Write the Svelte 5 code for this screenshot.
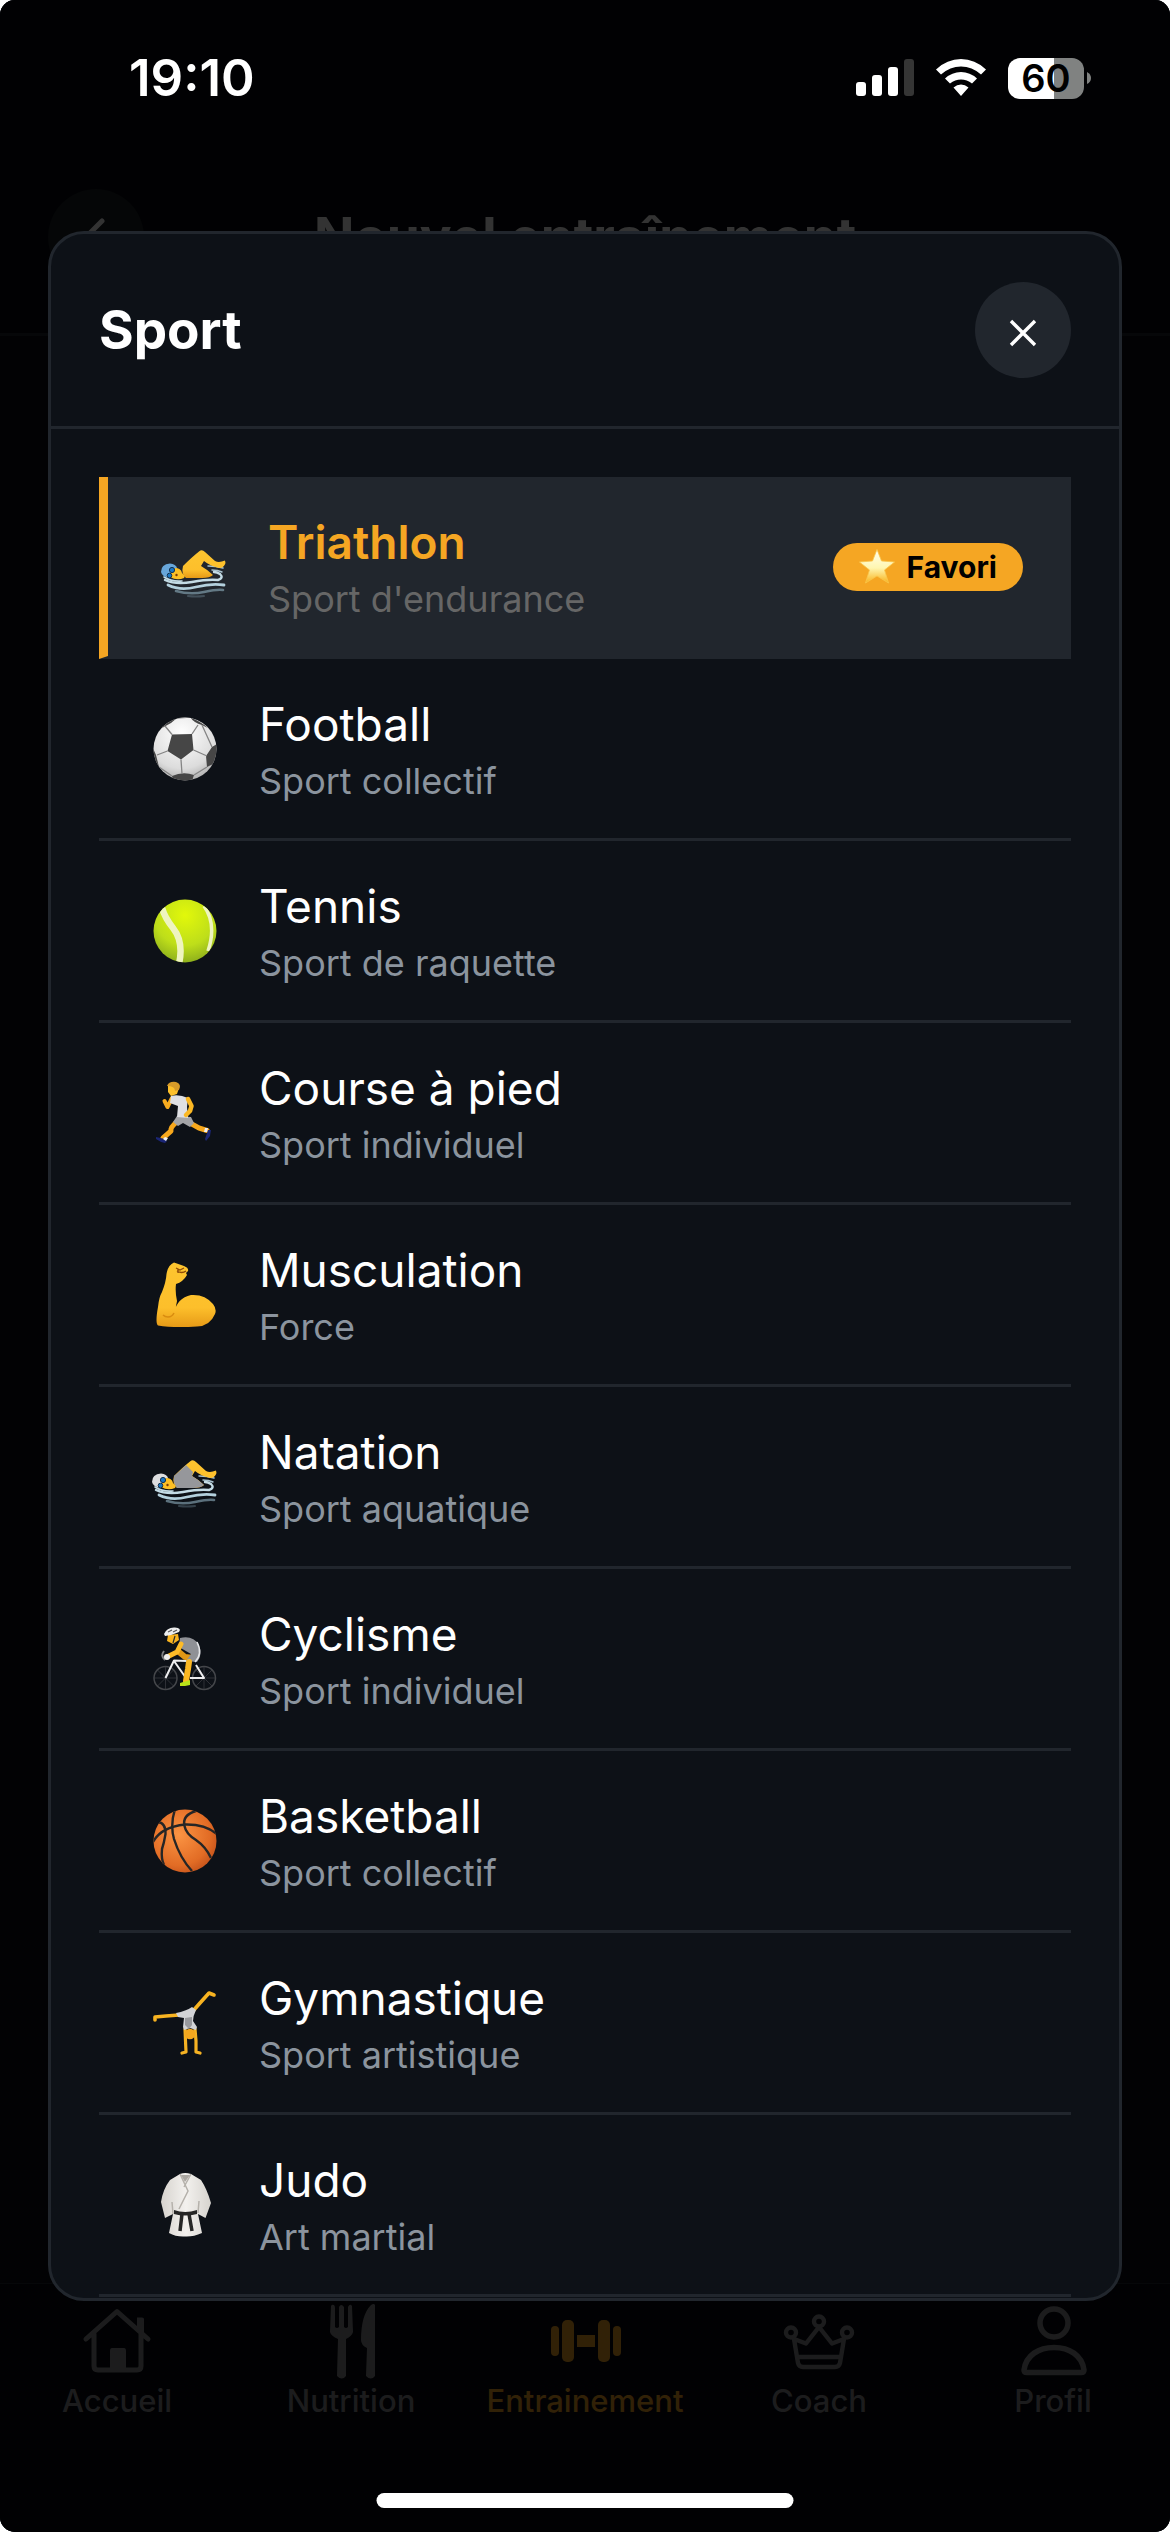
<script>
  const sports = [
    { icon: 'swim', name: 'Triathlon', kind: "Sport d'endurance", favorite: true },
    { icon: 'football', name: 'Football', kind: 'Sport collectif' },
    { icon: 'tennis', name: 'Tennis', kind: 'Sport de raquette' },
    { icon: 'run', name: 'Course à pied', kind: 'Sport individuel' },
    { icon: 'muscle', name: 'Musculation', kind: 'Force' },
    { icon: 'swimsuit', name: 'Natation', kind: 'Sport aquatique' },
    { icon: 'bike', name: 'Cyclisme', kind: 'Sport individuel' },
    { icon: 'basket', name: 'Basketball', kind: 'Sport collectif' },
    { icon: 'gym', name: 'Gymnastique', kind: 'Sport artistique' },
    { icon: 'judo', name: 'Judo', kind: 'Art martial' }
  ];

  const tabs = [
    { icon: 'home', label: 'Accueil' },
    { icon: 'fork', label: 'Nutrition' },
    { icon: 'dumbbell', label: 'Entrainement' },
    { icon: 'crown', label: 'Coach' },
    { icon: 'person', label: 'Profil' }
  ];

  let selected = $state('Triathlon');
  let activeTab = $state('Entrainement');
</script>

{#snippet swimmer(suit)}
  <g fill="none" stroke-linecap="round">
    <path d="M46 31Q54 31 61 33M50 35Q56 35 60 37" stroke="#a9c3d0" stroke-width="1.500" />
    <path d="M3 45Q14 50 30 47T56 45Q62 43 58 39Q55 37 52 37" stroke="#c3dbe5" stroke-width="2.400" />
    <path d="M2 42Q10 47 20 46" stroke="#c3dbe5" stroke-width="1.600" />
    <path d="M6 50Q18 56 34 52T62 50" stroke="#b3d0dd" stroke-width="2.800" />
    <path d="M14 56Q28 60 42 57T61 55" stroke="#8fb0bf" stroke-width="2.600" opacity="0.6" />
    <path d="M26 61Q34 62 42 61" stroke="#8fb0bf" stroke-width="2" opacity="0.3" />
  </g>
  <path d="M21 31Q30 22 37 16.500Q40 14 43 17L53 26Q57 28 63 25.500L63.500 28Q62 33 57 33Q48 31 42 26L39 31Q46 35 51 40Q48 43 40 43H24Q19 39 21 31Z" fill="url(#skin)" />
  {#if suit}
    <path d="M21 31Q28 25 33 20L40 27L39 31Q46 35 51 40Q48 43 40 43H24Q20 39 21 31Z" fill="#96979b" />
  {/if}
  <path d="M-1 37Q-1 29 8 28.500Q14 29 15 33L8 43Q0 42 -1 37Z" fill={suit ? '#dcdddf' : '#68a6da'} />
  <path d="M13 33Q19 33 20 38Q24 41 22 43Q15 46 8 42L9 38Z" fill="#fcbf24" />
  <circle cx="10" cy="35" r="2.600" fill="#1b78c5" stroke="#12304e" stroke-width="1" />
  <circle cx="7.500" cy="40.500" r="2.300" fill="#1b78c5" stroke="#12304e" stroke-width="1" />
  <circle cx="14.500" cy="40" r="1.200" fill="#7a3b06" />
{/snippet}

{#snippet emoji(name)}
  <svg class="emoji" viewBox="0 0 64 64" aria-hidden="true">
    {#if name === 'swim'}
      {@render swimmer(false)}
    {:else if name === 'swimsuit'}
      {@render swimmer(true)}
    {:else if name === 'football'}
      <circle cx="32" cy="32" r="31.500" fill="url(#white-ball)" />
      <g clip-path="url(#ball)">
        <path d="M19 17.500L39 17L40.500 33L28 42.500L14.500 34ZM37 0L45 4Q52 8 55 11L49 8Q41 6 37 0ZM12 5Q19 -1 24 1L18 6L9 11ZM64 27L59 30L53 39L54 50L60 47L64 40ZM-1 29L3 38L6 50L0 45ZM19 59Q30 54 41 58L39 64H20Z" fill="#464646" />
        <path d="M19 17.500L12 9M39 17L45 8M40.500 33L54 39M28 42.500L29 57M14.500 34L4 38M6 50L19 59M54 50L41 58M24 1L37 0M49 8L59 30" fill="none" stroke="#858585" stroke-width="1.300" />
      </g>
    {:else if name === 'tennis'}
      <circle cx="32" cy="32" r="31.500" fill="url(#lime-ball)" />
      <g clip-path="url(#ball)" fill="none" stroke="#eef4c0">
        <path d="M9 9Q12 19 20 29Q31 43 26 65" stroke-width="6.500" />
        <path d="M51 7Q64 25 55 52" stroke-width="3.500" />
      </g>
    {:else if name === 'run'}
      <path d="M19 17L14.500 26L11.500 20" fill="none" stroke="#f7ab1f" stroke-width="4" stroke-linecap="round" stroke-linejoin="round" />
      <path d="M25 40Q17 46 18 50L10 57M37 42L46 47L54 49.500" fill="none" stroke="#f7a81c" stroke-width="5" stroke-linecap="round" stroke-linejoin="round" />
      <path d="M3 56L12 58L14 60L12 62Q7 61 3 58ZM55 49L58 49L57 55L53 60L52 58Z" fill="#1b2675" />
      <path d="M12 56L15 57L13 60L10 58ZM52 47L55 47L54 51L51 51Z" fill="#f2f2f2" />
      <path d="M24 35L38 36L41 42L37 46L30 42L25 45L20 41Z" fill="#a3a4a7" />
      <path d="M18 15Q26 13 35 17L34 26L35 37L24 36L25 25L17 22Z" fill="#dfe0e4" />
      <path d="M35 18L38.500 25L37 30L33 34" fill="none" stroke="#fbb823" stroke-width="4.500" stroke-linecap="round" stroke-linejoin="round" />
      <path d="M15 5Q24 2 26 7L24 13L18 15L15 11Z" fill="#fdc02a" />
      <path d="M14 5Q16 0 23 1Q29 3 26 9L22 10Q22 5 14 5Z" fill="#d89b29" />
    {:else if name === 'muscle'}
      <path d="M13.500 11Q15 2 21 -0.500L31 3Q36 5 35 8L33 10L34 12Q30 19 23 21Q22 29 24 38Q23 45 21 50Q24 35 38 32Q52 31 60 41Q64 46 62 51Q57 63 44 63.500Q20 65 5 62.500Q2 60 5 44Q6 34 9 29Q13 19 13.500 11Z" fill="url(#skin)" />
      <path d="M21 50Q19 54 15 54Q12 54 10 52" fill="none" stroke="#d98c10" stroke-width="1.500" />
      <path d="M23 5L27 7L31 5M24 8Q29 11 33 8M25 6L25 10" fill="none" stroke="#8f4b08" stroke-width="1.300" />
    {:else if name === 'bike'}
      <g fill="none" stroke="#45474b">
        <circle cx="12.500" cy="51" r="11.500" stroke-width="1.500" />
        <circle cx="51" cy="51" r="11.500" stroke-width="1.500" />
        <path d="M12.500 39.500V62.500M1 51H24M4.500 43L20.500 59M4.500 59L20.500 43M51 39.500V62.500M39.500 51H62.500M43 43L59 59M43 59L59 43" stroke-width="0.600" />
      </g>
      <path d="M11 24Q7 29 12 33" fill="none" stroke="#7d7f82" stroke-width="2" />
      <path d="M12.500 51L21 33.500L34 34M21 34L33 51M37 51L51 51L43 38" fill="none" stroke="#eeeeef" stroke-width="2" stroke-linejoin="round" />
      <path d="M26 25L32 30L40 31" fill="none" stroke="#e09716" stroke-width="6" stroke-linecap="round" />
      <path d="M27 11Q40 8 46 18Q50 28 44 35L33 34L38 27L26 20Z" fill="#8f9196" />
      <path d="M44 15Q50 27 42 35" fill="none" stroke="#e4e5e8" stroke-width="1.500" />
      <path d="M36 35L35 42L33 54" fill="none" stroke="#fbb722" stroke-width="6" stroke-linecap="round" />
      <path d="M28 17L24 25L14 30" fill="none" stroke="#fdbb27" stroke-width="5" stroke-linecap="round" stroke-linejoin="round" />
      <circle cx="14" cy="30" r="3" fill="#eeeeef" />
      <path d="M27 56L37 53L37 58L32 59H27Z" fill="#b8e319" />
      <path d="M15 8L25 7L26 13L20 17L14 14Z" fill="#f9b41f" />
      <path d="M22 9L20 16" stroke="#2d2d2d" stroke-width="1.200" />
      <path d="M11 7Q14 0 22 0.500Q29 1 26 5Q20 8 12 9Z" fill="#eceded" />
      <path d="M15 5L19 3M20 5L24 3" stroke="#58595c" stroke-width="1.200" />
    {:else if name === 'basket'}
      <circle cx="32" cy="32" r="31.500" fill="url(#orange-ball)" />
      <g clip-path="url(#ball)" fill="none" stroke="#262626" stroke-width="2.400">
        <path d="M0 33Q8 18 32 15.500Q52 15 64 25" />
        <path d="M22 0Q17 16 21 30Q27 49 39 62" />
        <path d="M5 13Q13 14 12.500 25Q11 34 9 40Q8 50 11 56" />
        <path d="M43 2Q29 6 31.500 17Q33 25 43 31Q53 38 58 49" />
      </g>
    {:else if name === 'gym'}
      <path d="M2 29L2 26L13 25L26 24M40 20L47 12L56 2L61 4" fill="none" stroke="#f7b321" stroke-width="3.600" stroke-linejoin="round" stroke-linecap="round" />
      <path d="M32 38L32.500 50L33 61L29 62M42 38L43 50L43 61L47 62" fill="none" stroke="#f5b223" stroke-width="3.200" stroke-linejoin="round" stroke-linecap="round" />
      <path d="M23 22Q33 20 39 16L43 19Q40 25 40 30L44 36L43 39L37 37L31 39L30 36L31 27L25 26Z" fill="#d2d3d6" />
      <path d="M32 27L39 26L39 34L36 38L32 34Z" fill="#98999d" />
      <circle cx="37" cy="43" r="5.300" fill="#f3a71e" />
    {:else if name === 'judo'}
      <path d="M27 1Q32 -1 38 1L48 7Q54 16 58 30L52.500 45L45 41L49 60Q40 64 32 63.500Q23 64 16 60L20 41L12 45L8 29Q10 16 17 7Z" fill="url(#cloth)" />
      <path d="M20 41L19 29M45 40L46 28M27 1L35 18L26 36M38 1L31 14" fill="none" stroke="#b5b1ab" stroke-width="1.500" />
      <path d="M28 2L37 2L32 9Z" fill="#aaa6a0" />
      <path d="M21 37Q32 41 44 37V41Q32 44 21 41Z" fill="#262626" />
      <path d="M29 41L27 58M36 41L39 58" stroke="#262626" stroke-width="3.500" />
    {/if}
  </svg>
{/snippet}

{#snippet tabIcon(name)}
  <svg class="tab-icon" viewBox="0 0 72 72" aria-hidden="true" fill="none" stroke="currentColor" stroke-linecap="round" stroke-linejoin="round">
    {#if name === 'home'}
      <path d="M5 34L36 6.500L67 34M13 29V61Q13 65 17 65H56Q60 65 60 61V29" stroke-width="5" />
      <path d="M29 65V46Q29 43 31 43H43Q45 43 45 46V65ZM56 12.500H61Q63 12.500 63 14V30L56 24Z" fill="currentColor" stroke="none" />
    {:else if name === 'fork'}
      <path d="M15 27L16 1Q17 -1 19 0Q20 1 20 3V22Q22 24 24 22V2Q26 -2 29 2V22Q31 24 33 22V2Q35 -2 37 1L38 27Q37 31 31 34L31 71Q27 76 22 71L23 34Q16 31 15 27ZM60 0V71Q56 76 51 71L52 43Q46 40 46 35Q46 10 56 0Q59 -2 60 0Z" fill="currentColor" stroke="none" />
    {:else if name === 'dumbbell'}
      <g fill="currentColor" stroke="none">
        <rect x="2" y="21" width="8" height="30" rx="4" />
        <rect x="13" y="15" width="12" height="42" rx="5" />
        <rect x="28" y="30" width="18" height="12" />
        <rect x="49" y="15" width="12" height="42" rx="5" />
        <rect x="64" y="21" width="8" height="30" rx="4" />
      </g>
    {:else if name === 'crown'}
      <g stroke-width="4.400">
        <circle cx="8" cy="27.500" r="5" />
        <circle cx="36" cy="16.500" r="5" />
        <circle cx="64" cy="27.500" r="5" />
        <path d="M11 34L23 38.500L36 22L49 38.500L61 34L57 58Q56 62 52 62H20Q16 62 15 58ZM15 52H57" />
      </g>
    {:else}
      <circle cx="37" cy="18" r="14" stroke-width="5.500" />
      <path d="M7 65C9 50 22 42.500 37 42.500S65 50 67 65Q67 67.500 64 67.500H10Q7 67.500 7 65Z" stroke-width="5.500" />
    {/if}
  </svg>
{/snippet}

<svg class="defs" aria-hidden="true">
  <defs>
    <clipPath id="ball"><circle cx="32" cy="32" r="31.500" /></clipPath>
    <radialGradient id="white-ball" cx="0.45" cy="0.25" r="0.8">
      <stop offset="0" stop-color="#ffffff" /><stop offset="0.7" stop-color="#dcdcdc" /><stop offset="1" stop-color="#a8a8a8" />
    </radialGradient>
    <radialGradient id="lime-ball" cx="0.5" cy="0.25" r="0.8">
      <stop offset="0" stop-color="#e2f80a" /><stop offset="0.6" stop-color="#bede1a" /><stop offset="1" stop-color="#86a81c" />
    </radialGradient>
    <radialGradient id="orange-ball" cx="0.4" cy="0.4" r="0.7">
      <stop offset="0" stop-color="#fb9443" /><stop offset="0.7" stop-color="#e26c25" /><stop offset="1" stop-color="#bf4e19" />
    </radialGradient>
    <linearGradient id="skin" x1="0" y1="0" x2="0" y2="1">
      <stop offset="0" stop-color="#fdc52f" /><stop offset="0.7" stop-color="#fdbf2b" /><stop offset="1" stop-color="#e69a17" />
    </linearGradient>
    <linearGradient id="cloth" x1="0" y1="0" x2="1" y2="0">
      <stop offset="0" stop-color="#d6d3ce" /><stop offset="0.5" stop-color="#f3f1ee" /><stop offset="1" stop-color="#d6d3ce" />
    </linearGradient>
    <linearGradient id="gold" x1="0" y1="0" x2="0" y2="1">
      <stop offset="0" stop-color="#fffef0" /><stop offset="0.55" stop-color="#fff6b0" /><stop offset="1" stop-color="#f8b31c" />
    </linearGradient>
  </defs>
</svg>

<div class="app">
  <header class="page-header">
    <button class="back" aria-label="Retour">
      <svg viewBox="0 0 48 48" aria-hidden="true"><path d="M30 8L14 24L30 40" fill="none" stroke="currentColor" stroke-width="5" stroke-linecap="round" stroke-linejoin="round" /></svg>
    </button>
    <h1>Nouvel entraînement</h1>
  </header>

  <nav class="tabs">
    {#each tabs as tab}
      <button class="tab" class:active={activeTab === tab.label} onclick={() => (activeTab = tab.label)}>
        {@render tabIcon(tab.icon)}
        <span>{tab.label}</span>
      </button>
    {/each}
  </nav>

  <div class="overlay">
    <div class="modal" role="dialog" aria-modal="true" aria-labelledby="sheet-title">
      <div class="modal-header">
        <h2 id="sheet-title">Sport</h2>
        <button class="close" aria-label="Fermer">
          <svg viewBox="0 0 24 24" aria-hidden="true"><path d="M0 0L24 24M24 0L0 24" fill="none" stroke="currentColor" stroke-width="3.400" /></svg>
        </button>
      </div>
      <ul class="list">
        {#each sports as sport}
          <li>
            <button class="row" class:selected={selected === sport.name} aria-pressed={selected === sport.name} onclick={() => (selected = sport.name)}>
              {@render emoji(sport.icon)}
              <span class="info">
                <span class="name">{sport.name}</span>
                <span class="kind">{sport.kind}</span>
              </span>
              {#if sport.favorite}
                <span class="badge">
                  <svg viewBox="0 0 36 36" aria-hidden="true"><path d="M18 0.500L22.500 12L35.500 13L25.500 21L29.500 34L18 27L6.500 34L10.500 21L0.500 13L13.500 12Z" fill="url(#gold)" stroke="#f9c64d" stroke-width="0.800" stroke-linejoin="round" /></svg>
                  Favori
                </span>
              {/if}
            </button>
          </li>
        {/each}
      </ul>
    </div>
  </div>

  <div class="status">
    <span class="clock">19:10</span>
    <span class="indicators">
      <svg class="signal" viewBox="0 0 58 38" aria-hidden="true">
        <rect x="0" y="23" width="10" height="14" rx="3" fill="#fff" />
        <rect x="16" y="16" width="10" height="21" rx="3" fill="#fff" />
        <rect x="32" y="8" width="10" height="29" rx="3" fill="#fff" />
        <rect x="48" y="0" width="10" height="37" rx="3" fill="#353535" />
      </svg>
      <svg class="wifi" viewBox="0 0 50 38" aria-hidden="true">
        <path d="M0 10.500Q11 0 25 0T50 10.500L45 15.500Q36 7.500 25 7.500T5 15.500ZM9 19.500Q16 13 25 13T41 19.500L36 24.500Q31 20.500 25 20.500T14 24.500ZM17.500 28.500Q21 25.500 25 25.500T32.500 28.500L25 37Z" fill="#fff" />
      </svg>
      <span class="battery"><span class="level">60</span><svg viewBox="0 0 4 12" aria-hidden="true"><path d="M0 0Q4 2 4 6T0 12Z" fill="#808281" /></svg></span>
    </span>
  </div>
  <div class="home-indicator"></div>
</div>

<style>
  :global(body) {
    margin: 0;
    background: #fff;
  }

  .app {
    position: relative;
    display: flex;
    flex-direction: column;
    justify-content: space-between;
    min-height: 100vh;
    overflow: hidden;
    border-radius: 15px;
    background: #0a0d14;
    color: #fff;
    font-family: Inter, "Liberation Sans", sans-serif;
  }

  button {
    margin: 0;
    padding: 0;
    border: 0;
    background: none;
    color: inherit;
    font: inherit;
  }

  h1,
  h2,
  ul {
    margin: 0;
    padding: 0;
  }

  svg {
    display: block;
    flex: none;
    overflow: visible;
  }

  .defs {
    position: absolute;
    width: 0;
    height: 0;
  }

  .page-header {
    display: grid;
    grid-template-columns: 96px 1fr 96px;
    align-items: center;
    padding: 189px 48px 48px;
    border-bottom: 3px solid #21262d;
    background: #05080f;
  }

  .back {
    display: grid;
    place-items: center;
    height: 96px;
    border-radius: 50%;
    background: #1a1e24;
  }

  .back svg {
    width: 48px;
    height: 48px;
  }

  h1,
  h2 {
    font-size: 53px;
    line-height: 66px;
    font-weight: 700;
  }

  h1 {
    text-align: center;
  }

  .tabs {
    display: grid;
    grid-template-columns: repeat(5, 1fr);
    padding: 21px 0 113px;
    border-top: 1px solid #21262d;
    background: #05080f;
  }

  .tab {
    display: flex;
    flex-direction: column;
    align-items: center;
    gap: 6px;
    color: #8e8e93;
    font-size: 31px;
    line-height: 36px;
    font-weight: 500;
  }

  .tab.active {
    color: #f5a623;
  }

  .tab-icon {
    width: 72px;
    height: 72px;
  }

  .overlay {
    position: absolute;
    inset: 0;
    display: flex;
    align-items: center;
    padding: 0 48px;
    background: rgba(0, 0, 0, 0.8);
  }

  .modal {
    display: flex;
    flex: 1;
    flex-direction: column;
    box-sizing: border-box;
    max-height: calc(100vh - 462px);
    overflow: hidden;
    border: 3px solid #21262d;
    border-radius: 36px;
    background: #0d1117;
  }

  .modal-header {
    display: flex;
    align-items: center;
    justify-content: space-between;
    padding: 48px;
    border-bottom: 3px solid #21262d;
  }

  .close {
    display: grid;
    place-items: center;
    box-sizing: border-box;
    width: 96px;
    height: 96px;
    padding-top: 6px;
    border-radius: 50%;
    background: #21262d;
  }

  .close svg {
    width: 24px;
    height: 24px;
  }

  .list {
    overflow-y: auto;
    padding: 48px;
    list-style: none;
    scrollbar-width: none;
  }

  .row {
    display: flex;
    align-items: center;
    box-sizing: border-box;
    width: 100%;
    padding: 36px 48px;
    border-bottom: 3px solid #21262d;
    text-align: left;
  }

  .row.selected {
    border-left: 9px solid #f5a623;
    background: #21262d;
  }

  .emoji {
    width: 64px;
    height: 64px;
    margin: 0 42px 0 6px;
  }

  .info {
    display: flex;
    flex: 1;
    flex-direction: column;
    gap: 8px;
  }

  .name {
    font-size: 46px;
    line-height: 58px;
  }

  .kind {
    color: #8b949e;
    font-size: 36px;
    line-height: 41px;
  }

  .selected .name {
    color: #f5a623;
    font-weight: 600;
  }

  .selected .kind {
    color: #666;
  }

  .badge {
    display: flex;
    align-items: center;
    gap: 12px;
    padding: 6px 26px;
    border-radius: 24px;
    background: #f5a623;
    color: #000;
    font-size: 30px;
    line-height: 36px;
    font-weight: 700;
  }

  .badge svg {
    width: 36px;
    height: 36px;
  }

  .status {
    position: absolute;
    inset: 0 0 auto;
    display: flex;
    align-items: center;
    justify-content: space-between;
    padding: 48px 79px 0 129px;
  }

  .clock {
    font-size: 51px;
    line-height: 60px;
    font-weight: 600;
  }

  .indicators {
    display: flex;
    align-items: center;
    gap: 22px;
  }

  .signal {
    width: 58px;
    height: 38px;
  }

  .wifi {
    width: 50px;
    height: 38px;
  }

  .battery {
    display: flex;
    align-items: center;
    gap: 3px;
  }

  .battery svg {
    width: 4px;
    height: 12px;
  }

  .level {
    width: 76px;
    border-radius: 12px;
    background: linear-gradient(90deg, #fff 60%, #808281 60%);
    color: #000;
    font-size: 38px;
    line-height: 41px;
    font-weight: 600;
    text-align: center;
  }

  .home-indicator {
    position: absolute;
    bottom: 24px;
    left: 50%;
    width: 417px;
    height: 15px;
    border-radius: 8px;
    background: #fff;
    transform: translateX(-50%);
  }
</style>
